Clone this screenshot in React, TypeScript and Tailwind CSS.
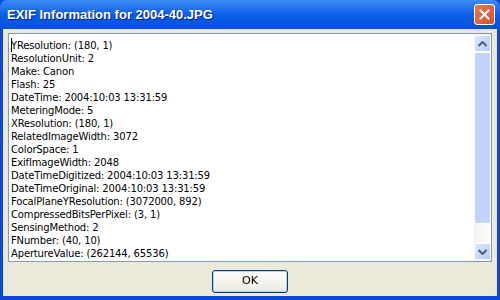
const lines = [
  "YResolution: (180, 1)",
  "ResolutionUnit: 2",
  "Make: Canon",
  "Flash: 25",
  "DateTime: 2004:10:03 13:31:59",
  "MeteringMode: 5",
  "XResolution: (180, 1)",
  "RelatedImageWidth: 3072",
  "ColorSpace: 1",
  "ExifImageWidth: 2048",
  "DateTimeDigitized: 2004:10:03 13:31:59",
  "DateTimeOriginal: 2004:10:03 13:31:59",
  "FocalPlaneYResolution: (3072000, 892)",
  "CompressedBitsPerPixel: (3, 1)",
  "SensingMethod: 2",
  "FNumber: (40, 10)",
  "ApertureValue: (262144, 65536)",
];

function Chevron({ up }: { up?: boolean }) {
  return (
    <svg width="9" height="6" viewBox="0 0 9 6" className={up ? "" : "rotate-180"}>
      <path d="M0.5 5 L4.5 1 L8.5 5" fill="none" stroke="#4d6185" strokeWidth="2" />
    </svg>
  );
}

function ScrollButton({ up }: { up?: boolean }) {
  return (
    <div className="flex h-[17px] w-[17px] items-center justify-center rounded-[2px] border border-white bg-gradient-to-br from-[#dce7fd] to-[#b7cbf6]">
      <Chevron up={up} />
    </div>
  );
}

export default function App() {
  return (
    <div className="flex h-[300px] w-[500px] flex-col overflow-hidden bg-[#0a48d6] font-['Liberation_Sans',sans-serif]">
      {/* title bar */}
      <div className="flex h-[29px] shrink-0 items-center justify-between rounded-t-[7px] bg-gradient-to-b from-[#3d8bf5] via-[#0a5fe9] to-[#0450d8] pl-[7px] pr-[5px]">
        <span className="text-[13px] font-bold text-white [text-shadow:1px_1px_0_#0a1a7a]">
          EXIF Information for 2004-40.JPG
        </span>
        <div className="flex h-[21px] w-[21px] items-center justify-center rounded-[3px] border border-white bg-gradient-to-br from-[#e8785a] to-[#d4502f]">
          <svg width="11" height="11" viewBox="0 0 11 11">
            <path d="M1.5 1.5 L9.5 9.5 M9.5 1.5 L1.5 9.5" stroke="white" strokeWidth="2" strokeLinecap="square" />
          </svg>
        </div>
      </div>

      {/* client area */}
      <div className="mx-[3px] mb-[4px] flex flex-1 flex-col bg-[#ece9d8] px-[5px] pt-[4px]">
        <div className="flex h-[229px] border border-[#7f9db9] bg-white">
          <div className="relative flex-1 px-[2px] pt-[5px] text-[10px] leading-[13px] tracking-[-0.15px] text-black font-['DejaVu_Sans',sans-serif]">
            <span className="absolute left-[2px] top-[4px] h-[14px] w-px bg-black" />
            {lines.map((l) => (
              <div key={l} className="whitespace-nowrap">
                {l}
              </div>
            ))}
          </div>
          <div className="flex w-[17px] flex-col bg-[#f4f4f0] py-[1px]">
            <ScrollButton up />
            <div className="h-[172px] rounded-[2px] border border-white bg-[#c3d3fc]" />
            <div className="flex-1 bg-gradient-to-r from-[#f3f1ec] to-[#fefefb]" />
            <ScrollButton />
          </div>
        </div>
        <div className="flex justify-center pt-[8px]">
          <button className="h-[23px] w-[76px] rounded-[3px] border border-[#003c74] bg-gradient-to-b from-white to-[#ece9de] text-[11px] text-black shadow-[inset_0_0_0_1px_#b9d1fa] font-['DejaVu_Sans',sans-serif]">
            OK
          </button>
        </div>
      </div>
    </div>
  );
}
